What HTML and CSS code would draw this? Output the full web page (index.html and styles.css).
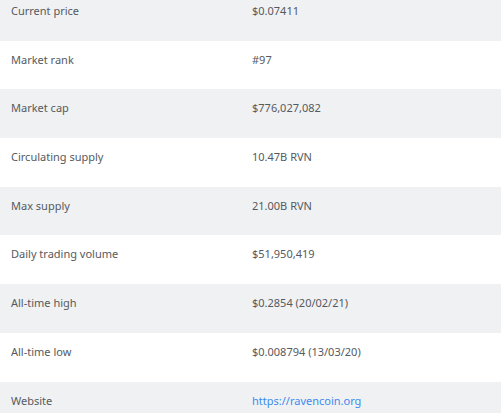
FILE: index.html
```html
<!DOCTYPE html>
<html>
<head>
<meta charset="utf-8">
<link rel="stylesheet" href="styles.css">
</head>
<body>
<div class="stats">
  <div class="row"><div class="label">Current price</div><div class="value">$0.07411</div></div>
  <div class="row"><div class="label">Market rank</div><div class="value">#97</div></div>
  <div class="row"><div class="label">Market cap</div><div class="value">$776,027,082</div></div>
  <div class="row"><div class="label">Circulating supply</div><div class="value">10.47B RVN</div></div>
  <div class="row"><div class="label">Max supply</div><div class="value">21.00B RVN</div></div>
  <div class="row"><div class="label">Daily trading volume</div><div class="value">$51,950,419</div></div>
  <div class="row"><div class="label">All-time high</div><div class="value">$0.2854 (20/02/21)</div></div>
  <div class="row"><div class="label">All-time low</div><div class="value">$0.008794 (13/03/20)</div></div>
  <div class="row"><div class="label">Website</div><div class="value"><a class="link" href="#">https://ravencoin.org</a></div></div>
</div>
</body>
</html>
```
FILE: styles.css
```css
html, body {
  margin: 0;
  padding: 0;
  background: #ffffff;
}
body {
  font-family: "Noto Sans", "Open Sans", sans-serif;
  font-size: 11px;
  color: #555a60;
  overflow: hidden;
}
.stats {
  margin-top: -8px;
  display: flex;
  flex-direction: column;
}
.row {
  display: grid;
  grid-template-columns: 241px 1fr;
  height: 48.7px;
  box-sizing: border-box;
  padding-top: 11px;
  line-height: 16px;
}
.row:nth-child(odd) {
  background: #f0f1f3;
}
.label, .value {
  padding-left: 11px;
}
.link {
  color: #3d8bf0;
  text-decoration: none;
}
```
